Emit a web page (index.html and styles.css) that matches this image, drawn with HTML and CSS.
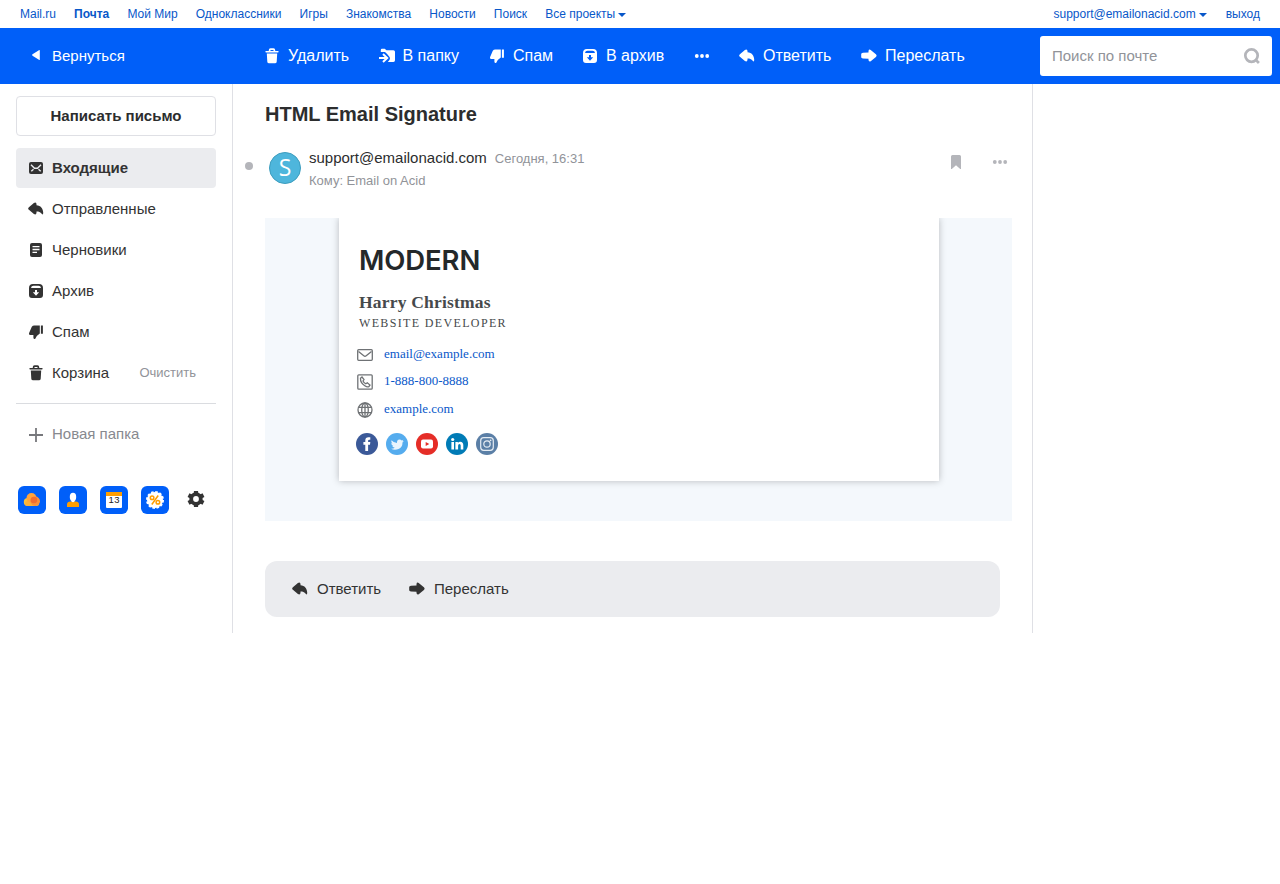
FILE: index.html
```html
<!DOCTYPE html>
<html lang="ru">
<head>
<meta charset="utf-8">
<title>HTML Email Signature - Почта Mail.ru</title>
<link rel="stylesheet" href="styles.css">
</head>
<body>
<svg class="sprite" aria-hidden="true">
  <symbol id="trash" viewBox="0 0 16 16"><path d="M4.800 3V2Q4.800.3 6.500.3h3q1.700 0 1.700 1.700v1h2.600q.9 0 .9.800t-.9.800H2.200q-.9 0-.9-.8T2.200 3zM6.500 3h3V2H6.500zM2.800 5.500h10.400l-.5 8.200q-.1 1.600-1.800 1.600H5.100q-1.700 0-1.800-1.600z"/></symbol>
  <symbol id="reply" viewBox="0 0 16 16"><path d="M5.900 1.900Q8.300.6 8.500 3v1.300c4.200.3 6.500 3.200 6.700 7.200.1 2-.7 2.400-1.500 1.300C12.500 11.100 10.700 10.500 8.500 10.500v1.300q-.2 2.400-2.600 1.200L.9 8.800Q-.6 7.500.9 6.200z"/></symbol>
  <symbol id="forward" viewBox="0 0 16 16"><path d="M9.700 1.900Q7.800 1 7.500 3v1.500L2 4.700Q.2 4.900.2 6v3.200q0 1.100 1.800 1.300l5.500.2V12q.3 2 2.200 1.200L14.900 9q1.400-1.400 0-2.800z"/></symbol>
  <symbol id="archive" viewBox="0 0 16 16"><path fill-rule="evenodd" d="M5 .9h6q4 0 4 4v7.200q0 2.900-3 2.900H4q-3 0-3-2.900V4.900q0-4 4-4zM3 5h10Q12.700 2.700 10.500 2.700h-5Q3.300 2.700 3 5zM7 7v2.200H4.800L8 12.700l3.200-3.500H9V7z"/></symbol>
  <symbol id="spam" viewBox="0 0 16 16"><path d="M3.800 2.700Q4.700 1.500 6.300 1.500h5.500V9.500L8.800 12l-1.700 3q-1.500.4-1.700-1.300V11H2.200Q.5 11 1 9.200zM12.900 1.500h2V9.800h-2z"/></symbol>
  <symbol id="folder" viewBox="0 0 18 16"><path d="M2.800 4V2Q2.800.8 4 .8h2.700l1.800 1.400h6.900q1.600 0 1.600 1.600v8.500q0 1.600-1.600 1.600H9.800q2.200-2.100 2.200-3.400 0-2-5-6.500z"/><path d="M1 10h6.500M5 6 9.200 10 5 14" fill="none" stroke="currentColor" stroke-width="2"/></symbol>
  <symbol id="inbox" viewBox="0 0 16 16"><rect x="1" y="2" width="14" height="12" rx="2"/><path d="m3 4.800 3.500 3.500h3L13 4.800M3.300 11.300l2.200-2M12.700 11.300l-2.200-2" fill="none" stroke="#ebecef" stroke-width="1.400"/></symbol>
  <symbol id="draft" viewBox="0 0 16 16"><rect x="2" y="1" width="12" height="14" rx="2"/><path d="M4.500 4.600h7M4.500 7.500h7M4.500 10.400H9" fill="none" stroke="#fff" stroke-width="1.300"/></symbol>
  <symbol id="dots" viewBox="0 0 16 16"><circle cx="2.800" cy="8" r="1.900"/><circle cx="8" cy="8" r="1.900"/><circle cx="13.200" cy="8" r="1.900"/></symbol>
</svg>

<header class="portal">
  <nav class="portal-nav">
    <a>Mail.ru</a><a class="current">Почта</a><a>Мой Мир</a><a>Одноклассники</a><a>Игры</a><a>Знакомства</a><a>Новости</a><a>Поиск</a><a class="has-caret">Все проекты</a>
  </nav>
  <div class="portal-user"><a class="has-caret">support@emailonacid.com</a><a>выход</a></div>
</header>

<div class="toolbar">
  <a class="back"><svg viewBox="0 0 8 12"><path d="M7.800 1.600v8.800q0 1-.9.400L.5 6.700Q-.2 6 .5 5.300L6.900 1.200q.9-.6.9.4z"/></svg>Вернуться</a>
  <div class="actions">
    <a class="act del"><svg><use href="#trash"/></svg>Удалить</a>
    <a class="act move"><svg class="wide"><use href="#folder"/></svg>В папку</a>
    <a class="act junk"><svg><use href="#spam"/></svg>Спам</a>
    <a class="act arch"><svg><use href="#archive"/></svg>В архив</a>
    <a class="act more"><svg><use href="#dots"/></svg></a>
    <a class="act repl"><svg><use href="#reply"/></svg>Ответить</a>
    <a class="act"><svg><use href="#forward"/></svg>Переслать</a>
  </div>
  <div class="search"><span>Поиск по почте</span><svg viewBox="0 0 18 18"><circle cx="8.500" cy="8.600" r="6.200"/><path d="m12.300 12.400 3.600 3.600"/></svg></div>
</div>

<div class="layout">
  <aside class="sidebar">
    <a class="compose">Написать письмо</a>
    <nav class="folders">
      <a class="folder active"><svg><use href="#inbox"/></svg>Входящие</a>
      <a class="folder"><svg><use href="#reply"/></svg>Отправленные</a>
      <a class="folder"><svg><use href="#draft"/></svg>Черновики</a>
      <a class="folder"><svg><use href="#archive"/></svg>Архив</a>
      <a class="folder"><svg><use href="#spam"/></svg>Спам</a>
      <a class="folder"><svg><use href="#trash"/></svg>Корзина<span class="clear">Очистить</span></a>
    </nav>
    <a class="folder new-folder"><svg viewBox="0 0 16 16"><path d="M8 1v14M1 8h14" stroke="currentColor" stroke-width="1.800"/></svg>Новая папка</a>
    <div class="apps">
      <svg class="app" viewBox="0 0 28 28"><rect width="28" height="28" rx="6" fill="#005ff9"/><circle cx="9.800" cy="16" r="4" fill="#fbc13a"/><rect x="7" y="15" width="14" height="5" rx="2.500" fill="#fbb13a"/><circle cx="13.500" cy="12" r="5" fill="#ffa43c"/><circle cx="17.300" cy="15.300" r="4.700" fill="#fb9039"/><circle cx="15.900" cy="14" r="3.300" fill="#f46d2e"/></svg>
      <svg class="app" viewBox="0 0 28 28"><rect width="28" height="28" rx="6" fill="#005ff9"/><path d="M8 21v-2.500q0-3 3.500-3h5q3.500 0 3.500 3V21z" fill="#ff9e00"/><ellipse cx="14" cy="11" rx="3.200" ry="4.200" fill="#fff"/><path d="M12.400 13h3.200v2.500q-1.600 1.500-3.200 0z" fill="#fff"/></svg>
      <svg class="app" viewBox="0 0 28 28"><rect width="28" height="28" rx="6" fill="#005ff9"/><rect x="6" y="6" width="16" height="16" rx="1" fill="#fff"/><path d="M6 6h16v4H6z" fill="#ff9e00"/><text class="day" x="14.200" y="17">13</text></svg>
      <svg class="app" viewBox="0 0 28 28"><rect width="28" height="28" rx="6" fill="#005ff9"/><circle cx="14" cy="14" r="8" fill="#fff"/><circle cx="14" cy="14" r="8" fill="none" stroke="#fff" stroke-width="2" stroke-dasharray="2.500 1.689"/><g fill="none" stroke="#ff9e00" stroke-width="1.500"><circle cx="11.100" cy="11.700" r="1.800"/><circle cx="16.900" cy="16.300" r="1.800"/><path d="m17.200 9.500-6.400 9"/></g></svg>
      <svg class="gear" viewBox="0 0 18 18"><g fill="none" stroke="#333"><circle cx="9" cy="9" r="4.800" stroke-width="3.800"/><path d="M9 1.100v3M9 13.900v3M1.500 5.200l3 1.500M13.500 11.300l3 1.500M1.500 12.800l3-1.500M13.500 6.700l3-1.500" stroke-width="4.200"/></g></svg>
    </div>
  </aside>

  <main class="thread">
    <h1>HTML Email Signature</h1>
    <div class="letter-head">
      <span class="unread"></span>
      <span class="avatar">S</span>
      <div class="meta">
        <div class="from"><span>support@emailonacid.com</span><time>Сегодня, 16:31</time></div>
        <div class="to">Кому: Email on Acid</div>
      </div>
      <svg class="flag" viewBox="0 0 10 14"><path d="M1.500 0h7Q10 0 10 1.500V14h-.8L5 10.300.8 14H0V1.500Q0 0 1.500 0z"/></svg>
      <svg class="head-more"><use href="#dots"/></svg>
    </div>
    <section class="letter-body">
      <div class="card">
        <div class="brand">MODERN</div>
        <div class="name">Harry Christmas</div>
        <div class="role">WEBSITE DEVELOPER</div>
        <div class="contact mail"><svg viewBox="0 0 16 16"><rect x=".7" y="2.700" width="14.600" height="10.600" rx="1"/><path d="m1.500 4.500 5.300 4.300q1.200 1 2.400 0l5.300-4.300"/></svg><a>email@example.com</a></div>
        <div class="contact phone"><svg viewBox="0 0 16 16"><rect x=".8" y=".8" width="14.400" height="14.400" rx="1"/><path d="M3.500 4.200 5 3l2 2.500L6 7q.8 1.700 2.800 2.800l1.500-1L13 11l-1.200 1.700q-1.500.8-4-1Q3.200 8.600 3.500 4.200z"/></svg><a>1-888-800-8888</a></div>
        <div class="contact web"><svg viewBox="0 0 16 16"><circle cx="8" cy="8" r="7"/><ellipse cx="8" cy="8" rx="3.300" ry="7"/><path d="M8 1v14M1.700 5.300h12.600M1.700 10.700h12.600"/></svg><a>example.com</a></div>
        <div class="social">
          <svg viewBox="0 0 22 22"><circle cx="11" cy="11" r="11" fill="#3b5998"/><path d="M9.300 18v-6.300H7.400V9.100h1.900V7.500Q9.300 4.200 12.400 4.200h1.900v2.600h-1.200q-1 0-1 1v1.300h2.200l-.3 2.600h-1.900V18z" fill="#fff"/></svg>
          <svg viewBox="0 0 22 22"><circle cx="11" cy="11" r="11" fill="#55acee"/><path d="M5.500 7.300q2.200 2.600 5.500 2.800-.4-3.300 2.600-3.600 1.300 0 2.100.9l1.700-.6-1 1.500 1.400-.2-1.300 1.400q.1 4.800-4 6.600-4 1.500-7.400-.3 2.400.1 3.600-1-2-.3-2.600-2h1.200q-2.100-.8-2.100-2.700l1.200.3q-1.700-1.400-.9-3.100z" fill="#eaf5fd"/></svg>
          <svg viewBox="0 0 22 22"><circle cx="11" cy="11" r="11" fill="#e52d27"/><rect x="5" y="6.500" width="12" height="9" rx="2" fill="#fff"/><path d="m9.700 8.900 3.600 2.100-3.600 2.100z" fill="#e52d27"/></svg>
          <svg viewBox="0 0 22 22"><circle cx="11" cy="11" r="11" fill="#007bb6"/><circle cx="6.700" cy="6.500" r="1.600" fill="#fff"/><path d="M5.400 9h2.600v7.500H5.400zM9.400 9h2.500v1q.8-1.200 2.300-1.200 3.100 0 3.100 3.500v4.200h-2.600v-3.900q0-1.700-1.200-1.700-1.400 0-1.400 1.800v3.800H9.400z" fill="#fff"/></svg>
          <svg viewBox="0 0 22 22"><circle cx="11" cy="11" r="11" fill="#5b7fa6"/><g fill="none" stroke="#e6edf4" stroke-width="1.200"><rect x="4.700" y="4.700" width="12.600" height="12.600" rx="3"/><circle cx="11" cy="11" r="3.200"/></g><circle cx="14.600" cy="7.300" r=".9" fill="#e6edf4"/></svg>
        </div>
      </div>
    </section>
    <div class="reply-bar">
      <a class="act first"><svg><use href="#reply"/></svg>Ответить</a>
      <a class="act"><svg><use href="#forward"/></svg>Переслать</a>
    </div>
  </main>
</div>
</body>
</html>
```
FILE: styles.css
```css
* { box-sizing: border-box; }
body { margin: 0; background: #fff; color: #2c2d2e; font: 15px/20px "Liberation Sans", Arial, sans-serif; }
svg { display: block; flex: none; fill: currentColor; }
.sprite { position: absolute; width: 0; height: 0; }
a, span, time { white-space: nowrap; }

.portal { display: flex; justify-content: space-between; height: 28px; padding: 0 20px; font-size: 12px; line-height: 28px; color: #0857c9; }
.portal-nav { display: flex; gap: 18.1px; }
.portal-user { display: flex; gap: 19px; }
.current { font-weight: bold; }
.has-caret { display: flex; align-items: center; gap: 3px; }
.has-caret::after { content: ""; border: 4px solid transparent; border-top-color: currentColor; border-bottom: 0; margin-top: 2px; }

.toolbar { display: flex; height: 56px; background: #005ff9; color: #fff; }
.back { display: flex; align-items: center; gap: 12px; width: 264px; padding-left: 32px; }
.back svg { width: 8px; height: 12px; margin-top: -2px; }
.actions { display: flex; width: 776px; font-size: 16px; line-height: 54px; }
.act { display: flex; align-items: center; gap: 8px; }
.act svg { width: 16px; height: 16px; }
.act .wide { width: 18px; }
.actions svg { margin-top: -1px; }
.actions .del { width: 114px; }
.actions .move { width: 111px; gap: 6.500px; }
.actions .junk { width: 93px; }
.actions .arch { width: 112px; }
.actions .more { width: 45px; }
.actions .repl { width: 122px; }
.search { display: flex; align-items: center; justify-content: space-between; width: 232px; height: 40px; margin-top: 8px; padding: 0 11px 0 12px; border-radius: 3px; background: #fff; color: #919399; }
.search svg { width: 18px; height: 18px; margin-top: -1px; fill: none; stroke: #b4b5ba; stroke-width: 2.7; }

.layout { display: flex; height: 549px; }
.sidebar { width: 232px; padding: 12px 16px; }
.compose { display: block; height: 40px; border: 1px solid #dfe0e5; border-radius: 4px; font-weight: bold; line-height: 38px; text-align: center; }
.folders { display: grid; gap: 1px; margin-top: 12px; padding-bottom: 10px; border-bottom: 1px solid #dadce0; }
.folder { display: flex; align-items: center; gap: 8px; height: 40px; padding: 0 12px; border-radius: 4px; color: #333; }
.folder svg { width: 16px; height: 16px; }
.folder.active { background: #ebecef; font-weight: bold; }
.clear { margin: 0 8px 0 auto; font-size: 13px; color: #919399; }
.new-folder { margin-top: 10px; color: #87898f; }
.new-folder svg { margin-top: 2px; color: #77787c; }
.apps { display: flex; align-items: center; gap: 13px; margin-top: 32px; padding-left: 2px; }
.app { width: 28px; height: 28px; }
.day { font-size: 9.500px; fill: #222; text-anchor: middle; letter-spacing: .4px; }
.gear { width: 18px; height: 18px; margin: -2px 0 0 5px; }

.thread { width: 801px; border: solid #dfe0e5; border-width: 0 1px; padding-left: 12px; }
h1 { margin: 18px 0 0 20px; font-size: 20px; line-height: 24px; }
.letter-head { display: flex; height: 50px; margin-top: 22px; }
.unread { width: 8px; height: 8px; margin: 14px 16px 0 0; border-radius: 50%; background: #b4b5ba; }
.avatar { width: 32px; height: 32px; margin: 4px 8px 0 0; border: 1px solid #3d9dbe; border-radius: 50%; background: #4eb6dc; color: #fff; font: 500 23px/29px "Open Sans", sans-serif; text-align: center; }
.meta { width: 642px; }
.from { display: flex; gap: 8px; }
.from time, .to { font-size: 13px; color: #919399; }
.from time { padding-top: 1px; line-height: 19px; }
.to { margin-top: 3px; }
.flag { width: 10px; height: 14px; margin: 7px 31px 0 0; fill: #b4b5ba; }
.head-more { width: 16px; height: 16px; margin-top: 6px; fill: #b4b5ba; }
.letter-body { width: 747px; height: 303px; margin: 20px 0 0 20px; padding-left: 74px; background: #f4f8fc; overflow: hidden; }
.card { width: 600px; height: 263px; padding: 24px 20px 0; background: #fff; box-shadow: 0 0 7px rgba(0, 0, 0, .25); color: #46494b; font-family: "Liberation Serif", "Times New Roman", serif; }
.brand { color: #24282a; font: 600 27.500px/36px Inter, sans-serif; letter-spacing: -.1px; }
.name { margin-top: 14px; font-size: 17.500px; font-weight: bold; letter-spacing: .2px; }
.role { font-size: 12px; line-height: 22px; letter-spacing: 1.35px; }
.contact { display: flex; gap: 11px; margin-left: -2px; font-size: 13px; line-height: 16px; color: #0857c9; }
.contact svg { width: 16px; height: 16px; margin-top: 1px; fill: none; stroke: #6f7275; stroke-width: 1.3; }
.mail { margin-top: 12px; }
.phone { margin-top: 10px; }
.web { margin-top: 11px; }
.social { display: flex; gap: 8px; margin: 15px 0 0 -3px; }
.social svg { width: 22px; height: 22px; }
.reply-bar { display: flex; width: 735px; height: 56px; margin: 40px 0 0 20px; padding-left: 28px; border-radius: 12px; background: #ebecef; color: #333; }
.reply-bar svg { margin: -1px 0 0 -1px; }
.reply-bar .act { gap: 9px; }
.reply-bar .first { width: 117px; }
```
